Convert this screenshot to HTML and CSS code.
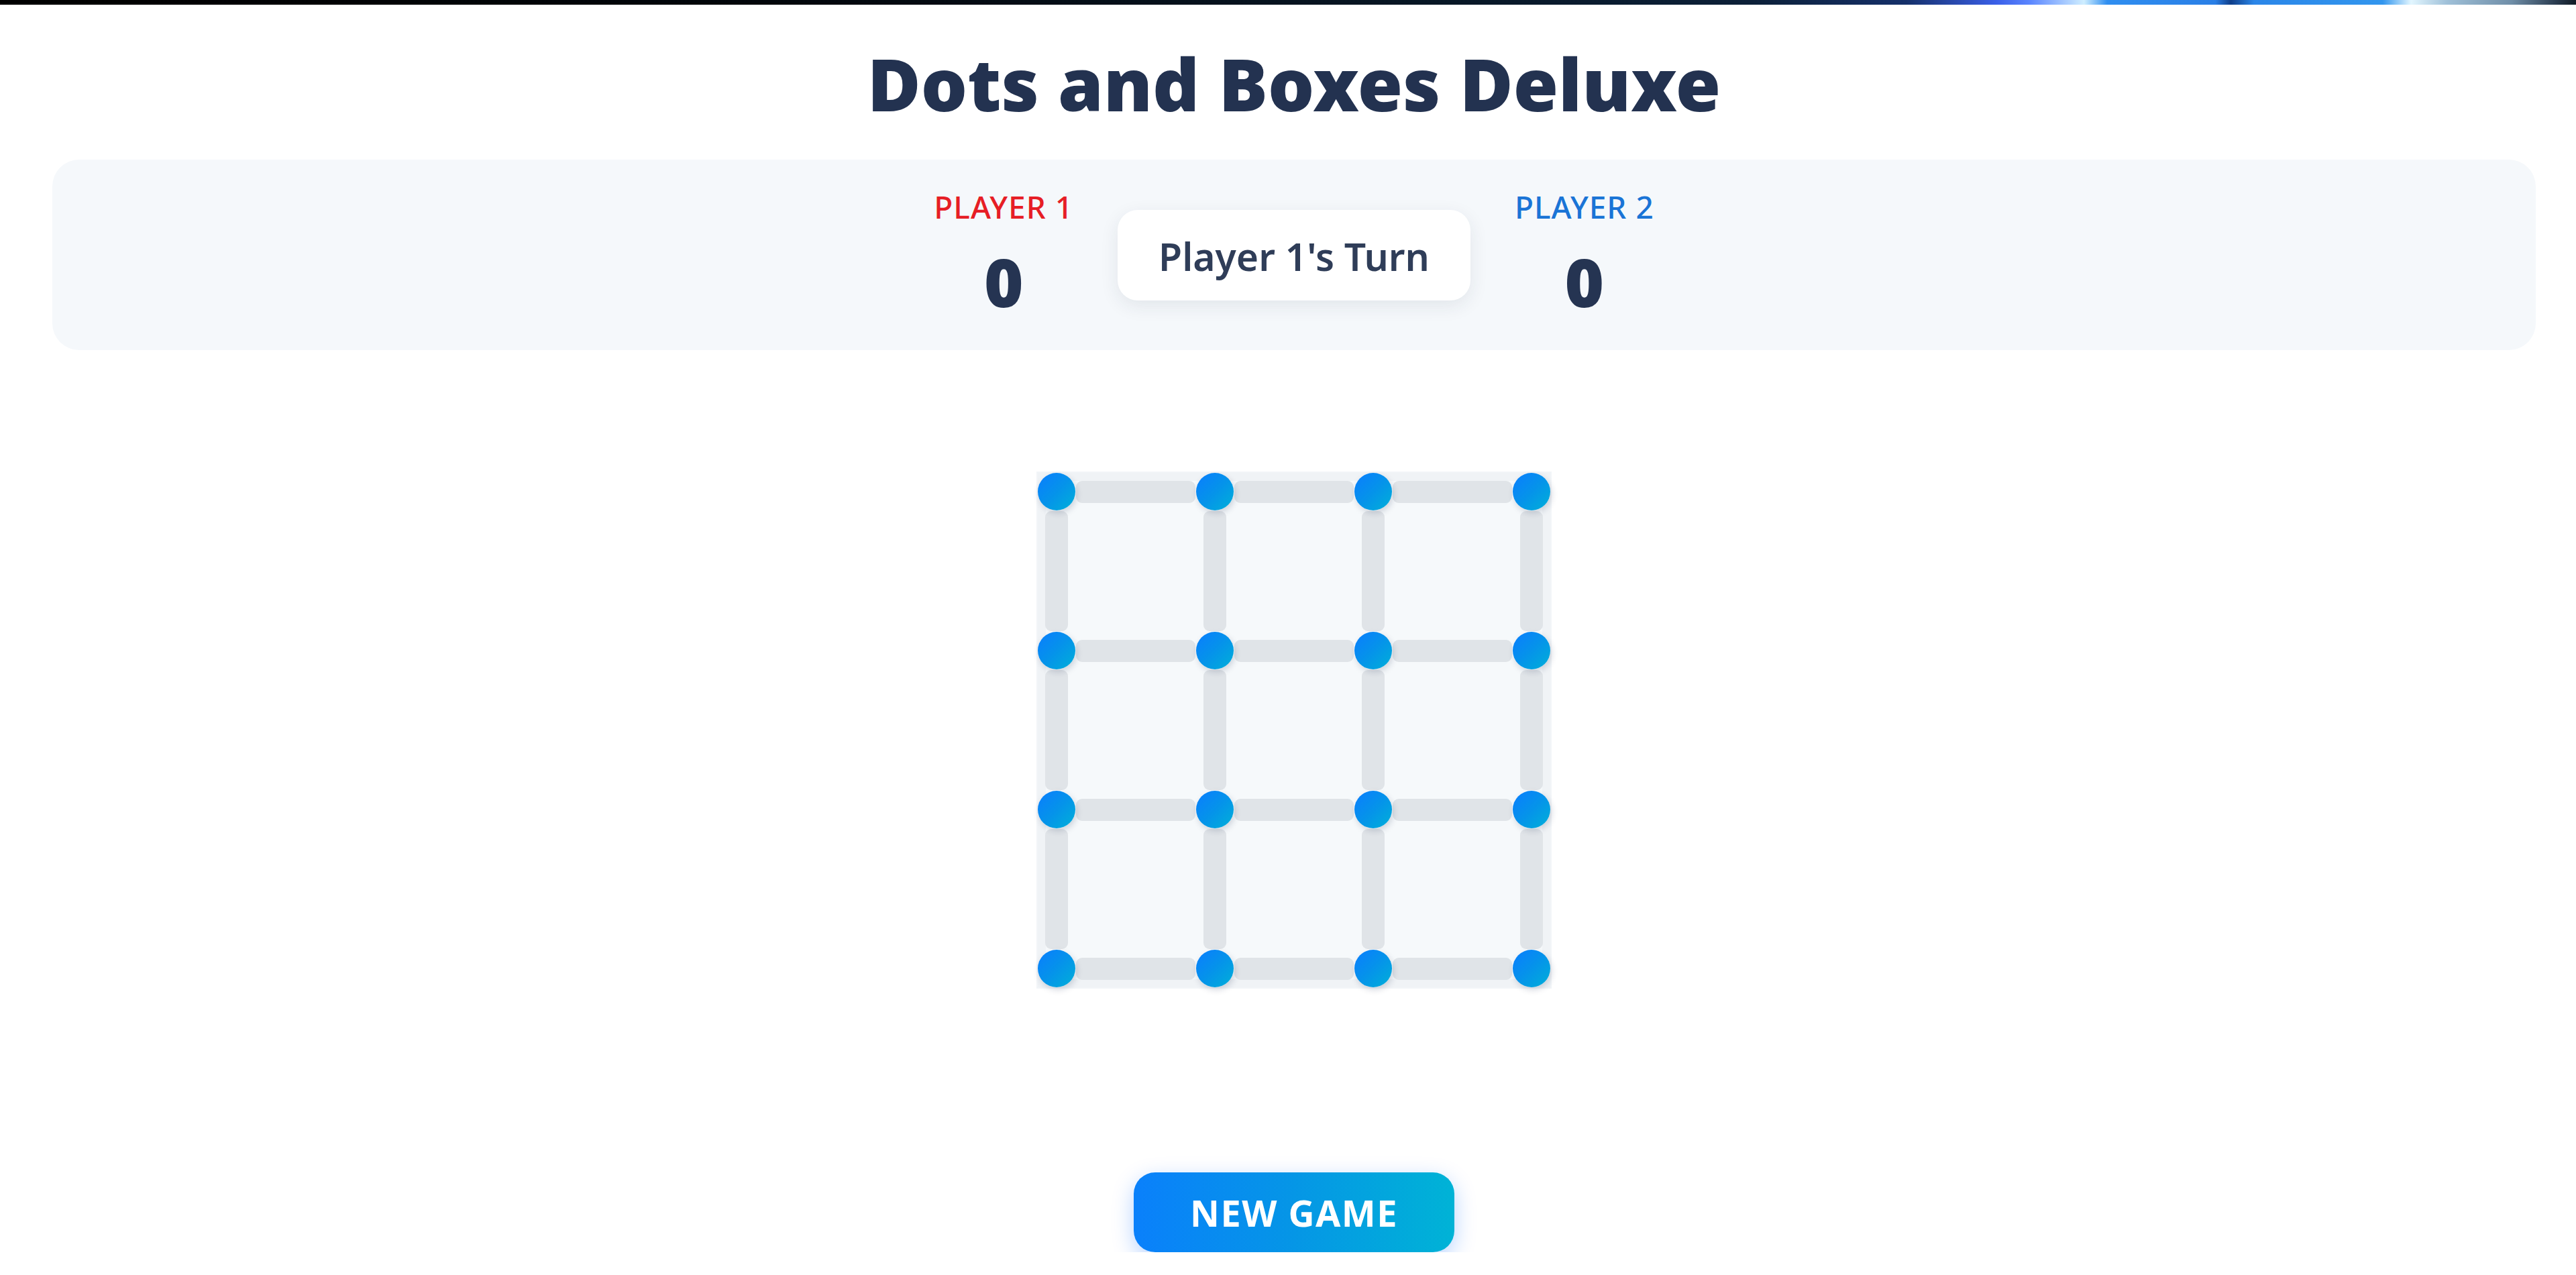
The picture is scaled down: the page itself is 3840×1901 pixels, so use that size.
FILE: index.html
```html
<!DOCTYPE html>
<html lang="en">
<head>
<meta charset="utf-8">
<title>Dots and Boxes Deluxe</title>
<link rel="stylesheet" href="styles.css">
</head>
<body>
<div class="topbar"></div>
<main class="app">
  <h1 class="title">Dots and Boxes Deluxe</h1>
  <section class="scoreboard">
    <div class="player p1">
      <div class="player-name">PLAYER 1</div>
      <div class="player-score">0</div>
    </div>
    <div class="turn">Player 1's Turn</div>
    <div class="player p2">
      <div class="player-name">PLAYER 2</div>
      <div class="player-score">0</div>
    </div>
  </section>
  <div class="board">
    <div class="dot"></div><div class="hline"></div><div class="dot"></div><div class="hline"></div><div class="dot"></div><div class="hline"></div><div class="dot"></div>
    <div class="vline"></div><div class="box"></div><div class="vline"></div><div class="box"></div><div class="vline"></div><div class="box"></div><div class="vline"></div>
    <div class="dot"></div><div class="hline"></div><div class="dot"></div><div class="hline"></div><div class="dot"></div><div class="hline"></div><div class="dot"></div>
    <div class="vline"></div><div class="box"></div><div class="vline"></div><div class="box"></div><div class="vline"></div><div class="box"></div><div class="vline"></div>
    <div class="dot"></div><div class="hline"></div><div class="dot"></div><div class="hline"></div><div class="dot"></div><div class="hline"></div><div class="dot"></div>
    <div class="vline"></div><div class="box"></div><div class="vline"></div><div class="box"></div><div class="vline"></div><div class="box"></div><div class="vline"></div>
    <div class="dot"></div><div class="hline"></div><div class="dot"></div><div class="hline"></div><div class="dot"></div><div class="hline"></div><div class="dot"></div>
  </div>
  <button class="new-game" type="button">NEW GAME</button>
</main>
</body>
</html>
```
FILE: styles.css
```css
html, body {
  margin: 0;
  padding: 0;
  background: #ffffff;
}

body {
  font-family: "Noto Sans", "Open Sans", "DejaVu Sans", sans-serif;
  color: #253452;
}

.topbar {
  height: 7px;
  background: linear-gradient(90deg,
    #000000 0%,
    #02060b 30%,
    #071624 55%,
    #0c2038 68%,
    #15306a 74%,
    #3a5fe8 77.5%,
    #5b86ff 78.8%,
    #cfeeff 80.9%,
    #2f8ef0 81.8%,
    #2a7fe6 86%,
    #0f3e8a 86.6%,
    #2b86e8 87.5%,
    #3296ee 92.5%,
    #e2f6ff 93.6%,
    #9fc0d8 95%,
    #6f8ea8 97.5%,
    #2a3c50 99.2%,
    #111a24 100%);
}

.app {
  padding: 0 60px 0 78px;
}

.title {
  margin: 51px 0 0;
  font-size: 109px;
  line-height: 131px;
  font-weight: 900;
  text-align: center;
  color: #233250;
}

.scoreboard {
  margin-top: 49px;
  height: 284px;
  border-radius: 40px;
  background: #f5f8fb;
  display: flex;
  justify-content: center;
  align-items: center;
  gap: 66px;
}

.player {
  display: flex;
  flex-direction: column;
  align-items: center;
}

.player-name {
  font-size: 46px;
  line-height: 54px;
  font-weight: 500;
  letter-spacing: 1px;
  margin-bottom: 24px;
}

.p1 .player-name {
  color: #e61e25;
}

.p2 .player-name {
  color: #1a74d6;
}

.player-score {
  font-size: 100px;
  line-height: 120px;
  font-weight: 900;
  color: #253452;
}

.turn {
  background: #ffffff;
  border-radius: 30px;
  padding: 30px 61px 27px;
  font-size: 57px;
  font-weight: 600;
  color: #2f3d58;
  box-shadow: 0 8px 28px rgba(30, 45, 70, 0.09);
}

.board {
  margin: 183px auto 0;
  width: max-content;
  display: grid;
  grid-template-columns: 56px 180px 56px 180px 56px 180px 56px;
  grid-template-rows: 56px 181px 56px 181px 56px 181px 56px;
  background: #f6f9fb;
  box-shadow: inset 0 0 0 12px #f0f3f6, 0 0 0 2px #f2f5f8;
}

.dot {
  width: 56px;
  height: 56px;
  border-radius: 50%;
  background: linear-gradient(135deg, #0a7dff 0%, #0593ea 50%, #00b0d8 100%);
  box-shadow: 2px 4px 10px rgba(20, 40, 80, 0.18);
  position: relative;
  z-index: 1;
}

.hline {
  align-self: center;
  height: 33px;
  margin: 0 1px;
  border-radius: 9px;
  background: #e0e4e8;
}

.vline {
  justify-self: center;
  width: 34px;
  margin: 1px 0;
  border-radius: 9px;
  background: #e0e4e8;
}

.box {
  background: #f6f9fb;
}

.new-game {
  display: flex;
  align-items: center;
  justify-content: center;
  margin: 276px auto 0;
  width: 478px;
  height: 119px;
  border: none;
  border-radius: 32px;
  background: linear-gradient(90deg, #0a80fb 0%, #0596e6 50%, #00b3d6 100%);
  color: #ffffff;
  font-family: "Noto Sans", "Open Sans", "DejaVu Sans", sans-serif;
  font-size: 54px;
  font-weight: 700;
  letter-spacing: 1.5px;
  box-shadow: 0 10px 32px rgba(0, 100, 255, 0.28);
  cursor: pointer;
}
```
